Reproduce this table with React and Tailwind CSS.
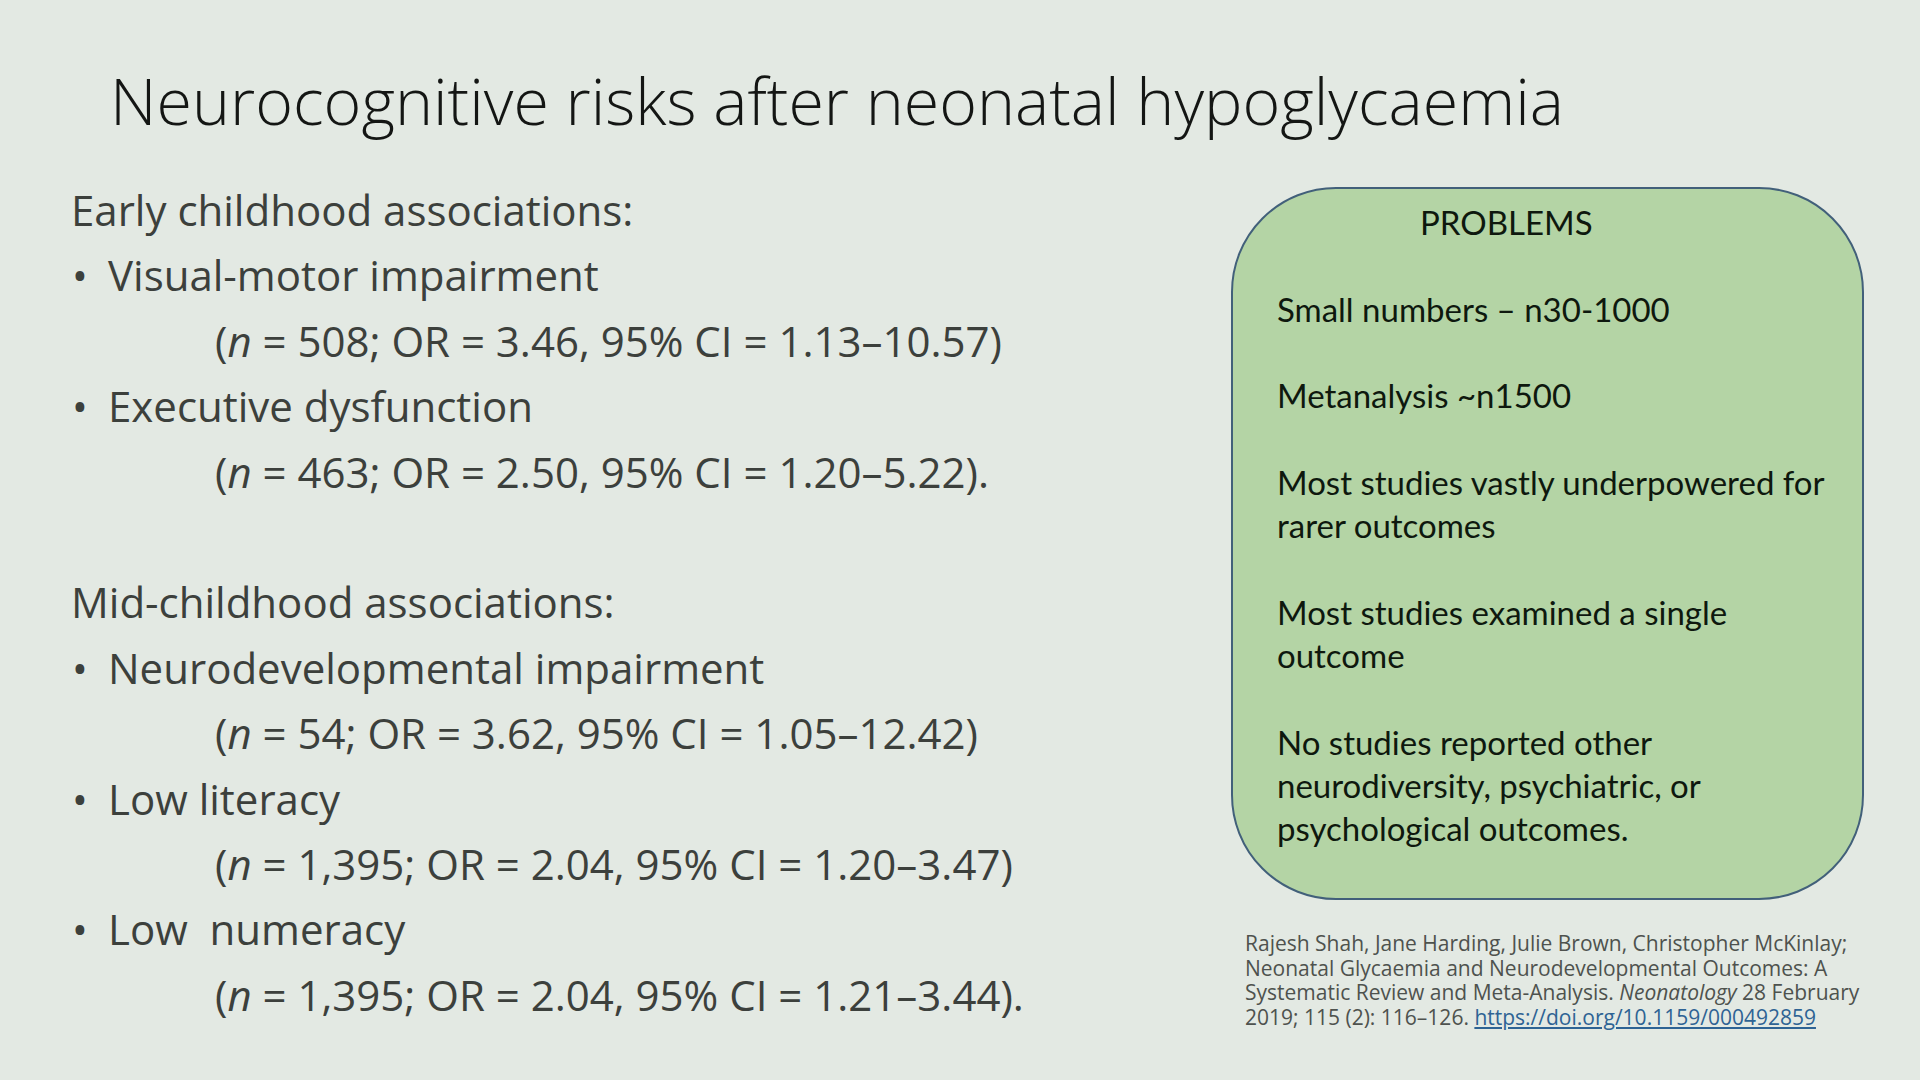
import React from "react";

const Line = ({ children, className = "" }) => (
  <div className={"h-[65.4px] leading-[65.4px] whitespace-nowrap " + className}>{children}</div>
);

const Bullet = ({ children }) => (
  <Line className="flex">
    <span className="w-[37px] flex-none pl-[1px]">•</span>
    <span>{children}</span>
  </Line>
);

const Sub = ({ rest }) => (
  <Line className="pl-[144px]">
    (<i>n</i>{rest}
  </Line>
);

const BoxLine = ({ children, className = "" }) => (
  <div className={"leading-[43.3px] " + className}>{children}</div>
);

export default function App() {
  return (
    <div
      className="w-[1920px] h-[1080px] overflow-hidden bg-[#e3e9e3]"
      style={{ fontFamily: '"Open Sans", "Noto Sans", sans-serif' }}
    >
      <h1 className="pt-[62px] pl-[110px] text-[64.5px] leading-[76px] font-light text-[#141614] whitespace-nowrap">
        Neurocognitive risks after neonatal hypoglycaemia
      </h1>
      <div className="flex mt-[39px]">
        <div className="w-[1231px] flex-none pl-[71px] text-[42px] text-[#3c403c]">
          <Line>Early childhood associations:</Line>
          <Bullet>Visual-motor impairment</Bullet>
          <Sub rest=" = 508; OR = 3.46, 95% CI = 1.13–10.57)" />
          <Bullet>Executive dysfunction</Bullet>
          <Sub rest=" = 463; OR = 2.50, 95% CI = 1.20–5.22)." />
          <Line> </Line>
          <Line>Mid-childhood associations:</Line>
          <Bullet>Neurodevelopmental impairment</Bullet>
          <Sub rest=" = 54; OR = 3.62, 95% CI = 1.05–12.42)" />
          <Bullet>Low literacy</Bullet>
          <Sub rest=" = 1,395; OR = 2.04, 95% CI = 1.20–3.47)" />
          <Bullet>Low&nbsp; numeracy</Bullet>
          <Sub rest=" = 1,395; OR = 2.04, 95% CI = 1.21–3.44)." />
        </div>
        <div className="w-[633px] flex-none mt-[10px]">
          <div
            className="h-[713px] rounded-[105px] border-2 border-[#42607a] bg-[#b4d4a5] pt-[12px] pl-[44px] pr-[8px] text-[33px] text-[#0e180e]"
            style={{ fontFamily: 'Lato, "Open Sans", sans-serif' }}
          >
            <BoxLine className="pl-[143px]">PROBLEMS</BoxLine>
            <BoxLine className="mt-[43.3px]">Small numbers – n30-1000</BoxLine>
            <BoxLine className="mt-[43.3px]">Metanalysis ~n1500</BoxLine>
            <BoxLine className="mt-[43.3px]">Most studies vastly underpowered for<br />rarer outcomes</BoxLine>
            <BoxLine className="mt-[43.3px]">Most studies examined a single<br />outcome</BoxLine>
            <BoxLine className="mt-[43.3px]">No studies reported other<br />neurodiversity, psychiatric, or<br />psychological outcomes.</BoxLine>
          </div>
          <div className="mt-[31px] pl-[14px] text-[21px] leading-[24.5px] text-[#4e524e] whitespace-nowrap">
            Rajesh Shah, Jane Harding, Julie Brown, Christopher McKinlay;<br />
            Neonatal Glycaemia and Neurodevelopmental Outcomes: A<br />
            Systematic Review and Meta-Analysis. <i>Neonatology</i> 28 February<br />
            2019; 115 (2): 116–126.{" "}
            <a href="#" className="text-[#2e6394] underline">https://doi.org/10.1159/000492859</a>
          </div>
        </div>
      </div>
    </div>
  );
}
